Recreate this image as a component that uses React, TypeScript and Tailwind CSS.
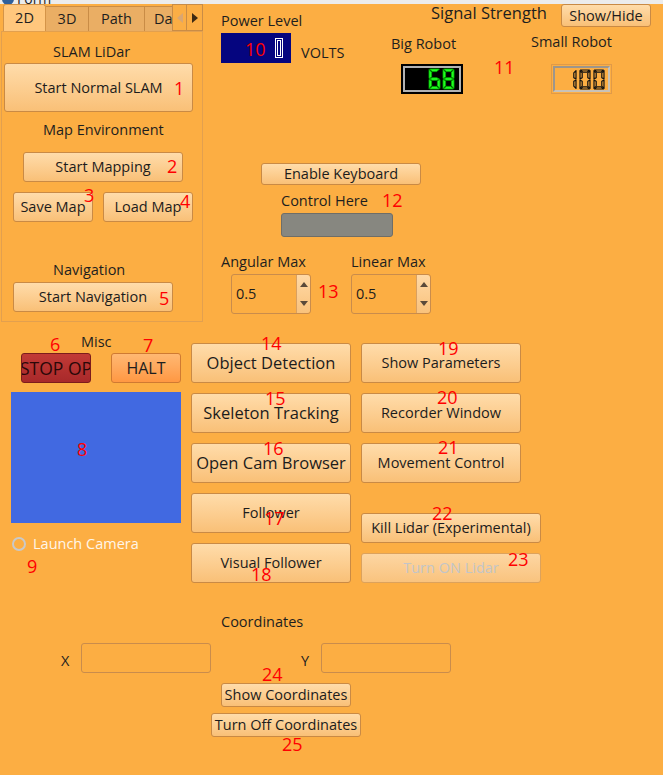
import type { ReactNode } from "react";

const SEG: Record<string, string> = {
  "0": "abcdef",
  "1": "bc",
  "6": "acdefg",
  "8": "abcdefg",
};

function Digit({
  ch,
  w,
  h,
  t,
  fill,
  stroke,
  sw = 1,
}: {
  ch: string;
  w: number;
  h: number;
  t: number;
  fill: string;
  stroke: string;
  sw?: number;
}) {
  const m = h / 2;
  const g = 0.6;
  const P: Record<string, number[][]> = {
    a: [[g, 0], [w - g, 0], [w - g - t, t], [g + t, t]],
    d: [[g, h], [w - g, h], [w - g - t, h - t], [g + t, h - t]],
    f: [[0, g], [t, g + t], [t, m - t / 2 - g], [0, m - g]],
    e: [[0, m + g], [t, m + t / 2 + g], [t, h - g - t], [0, h - g]],
    b: [[w, g], [w - t, g + t], [w - t, m - t / 2 - g], [w, m - g]],
    c: [[w, m + g], [w - t, m + t / 2 + g], [w - t, h - g - t], [w, h - g]],
    g: [
      [g, m],
      [g + t, m - t / 2],
      [w - g - t, m - t / 2],
      [w - g, m],
      [w - g - t, m + t / 2],
      [g + t, m + t / 2],
    ],
  };
  const on = SEG[ch] ?? "";
  return (
    <svg width={w + 2} height={h + 2} viewBox={`-1 -1 ${w + 2} ${h + 2}`}>
      {on.split("").map((s) => (
        <polygon
          key={s}
          points={P[s].map((p) => p.join(",")).join(" ")}
          fill={fill}
          stroke={stroke}
          strokeWidth={sw}
          strokeLinejoin="round"
        />
      ))}
    </svg>
  );
}

function Btn({
  className,
  children,
  disabled,
}: {
  className: string;
  children: ReactNode;
  disabled?: boolean;
}) {
  return (
    <button
      className={`flex items-center justify-center whitespace-nowrap overflow-hidden rounded-[3px] border bg-linear-to-b ${
        disabled
          ? "border-[#dca25c] from-[#fdd6a2] to-[#f9c37e] text-[#c2c5c8]"
          : "border-[#c98a45] from-[#ffdcaa] to-[#f9c077] text-[#1c1c1c]"
      } ${className}`}
    >
      {children}
    </button>
  );
}

function SpinBox() {
  return (
    <div className="flex w-[80px] h-[40px] rounded-[3px] border border-[#c98c4c]">
      <div className="flex-1 flex items-center pl-[4px] text-[14.5px] text-[#1c1c1c]">0.5</div>
      <div className="w-[14px] flex flex-col border-l border-[#d9a060] bg-linear-to-b from-[#ffd9a6] to-[#f9c27c] rounded-r-[3px]">
        <div className="flex-1 flex items-center justify-center">
          <svg width="8" height="5" viewBox="0 0 8 5">
            <polygon points="4,0 8,5 0,5" fill="#5a4a3a" />
          </svg>
        </div>
        <div className="flex-1 flex items-center justify-center">
          <svg width="8" height="5" viewBox="0 0 8 5">
            <polygon points="0,0 8,0 4,5" fill="#5a4a3a" />
          </svg>
        </div>
      </div>
    </div>
  );
}

const notes: [string, number, number][] = [
  ["1", 174, 79],
  ["2", 167, 157],
  ["3", 84, 186],
  ["4", 180, 192],
  ["5", 159, 289],
  ["6", 50, 335],
  ["7", 143, 336],
  ["8", 77, 440],
  ["9", 27, 557],
  ["10", 245, 40],
  ["11", 494, 58],
  ["12", 382, 191],
  ["13", 318, 282],
  ["14", 261, 334],
  ["15", 265, 389],
  ["16", 263, 439],
  ["17", 264, 509],
  ["18", 251, 565],
  ["19", 438, 339],
  ["20", 437, 388],
  ["21", 438, 438],
  ["22", 432, 504],
  ["23", 508, 550],
  ["24", 262, 665],
  ["25", 282, 735],
];

function TabWidget() {
  return (
    <div className="ml-[1px] w-[202px] flex flex-col">
      <div className="flex h-[27px] items-end">
        <div className="w-[171px] flex items-end overflow-hidden h-[27px] pl-[2px]">
          <div className="h-[27px] w-[43px] shrink-0 flex items-center justify-center bg-[#ffc77d] border border-b-0 border-[#d49448] rounded-t-[3px]">2D</div>
          <div className="h-[25px] w-[43px] shrink-0 flex items-center justify-center bg-[#eaae64] border border-l-0 border-b-0 border-[#c98c46]">3D</div>
          <div className="h-[25px] w-[56px] shrink-0 flex items-center justify-center bg-[#eaae64] border border-l-0 border-b-0 border-[#c98c46]">Path</div>
          <div className="h-[25px] w-[50px] shrink-0 flex items-center pl-[9px] bg-[#eaae64] border border-l-0 border-b-0 border-[#c98c46]">Data</div>
        </div>
        <div className="h-[27px] w-[15px] flex items-center justify-center border border-[#c98c46] bg-[#fbae45]">
          <svg width="6" height="10" viewBox="0 0 6 10">
            <polygon points="6,0 6,10 0,5" fill="#d9a672" />
          </svg>
        </div>
        <div className="h-[27px] w-[16px] flex items-center justify-center border border-l-0 border-[#c98c46] bg-[#fbae45]">
          <svg width="6" height="10" viewBox="0 0 6 10">
            <polygon points="0,0 0,10 6,5" fill="#3d2a12" />
          </svg>
        </div>
      </div>
      <div className="h-[291px] border border-[#e2a04f] flex flex-col">
        <div className="mt-[10px] ml-[51px] leading-[20px]">SLAM LiDar</div>
        <Btn className="mt-[1px] ml-[2px] w-[189px] h-[49px]">Start Normal SLAM</Btn>
        <div className="mt-[8px] ml-[41px] leading-[20px]">Map Environment</div>
        <Btn className="mt-[12px] ml-[21px] w-[160px] h-[30px]">Start Mapping</Btn>
        <div className="mt-[10px] flex">
          <Btn className="ml-[11px] w-[80px] h-[30px]">Save Map</Btn>
          <Btn className="ml-[10px] w-[90px] h-[30px]">Load Map</Btn>
        </div>
        <div className="mt-[38px] ml-[51px] leading-[20px]">Navigation</div>
        <Btn className="mt-[2px] ml-[11px] w-[160px] h-[30px]">Start Navigation</Btn>
      </div>
    </div>
  );
}

function RightPanel() {
  return (
    <div className="flex-1 flex flex-col">
      <div className="flex items-start">
        <div className="w-[188px] pl-[18px] flex flex-col">
          <div className="mt-[7px] leading-[20px]">Power Level</div>
          <div className="mt-[2px] flex items-start">
            <div className="w-[70px] h-[30px] bg-[#05057f] flex items-center justify-end pr-[8px]">
              <svg width="8" height="20" viewBox="0 0 8 20">
                <rect x="0.5" y="0.5" width="7" height="19" fill="none" stroke="#ffffff" strokeWidth="1" />
                <rect x="2.5" y="2.5" width="3" height="15" fill="none" stroke="#ffffff" strokeWidth="1" />
              </svg>
            </div>
            <div className="ml-[10px] mt-[10px] leading-[20px]">VOLTS</div>
          </div>
        </div>
        <div className="flex-1 flex flex-col">
          <div className="flex items-start h-[23px]">
            <div className="ml-[40px] text-[16.5px] leading-[18px]">Signal Strength</div>
            <Btn className="ml-auto mr-[12px] w-[90px] h-[23px]">Show/Hide</Btn>
          </div>
          <div className="flex items-start">
            <div className="w-[140px] flex flex-col">
              <div className="mt-[7px] leading-[20px]">Big Robot</div>
              <div className="mt-[10px] ml-[10px] w-[62px] h-[30px] border-2 border-black">
                <div className="w-full h-full border-2 border-[#b2b2b2] bg-black flex items-center justify-end pr-[4px] gap-[1px]">
                  <Digit ch="6" w={11} h={20} t={2.6} fill="#22ff22" stroke="#00b400" sw={0.8} />
                  <Digit ch="8" w={11} h={20} t={2.6} fill="#22ff22" stroke="#00b400" sw={0.8} />
                </div>
              </div>
            </div>
            <div className="flex flex-col">
              <div className="mt-[5px] leading-[20px]">Small Robot</div>
              <div className="mt-[12px] ml-[20px] w-[61px] h-[30px] border border-[#e09a48] p-[1px]">
                <div className="w-full h-full border-2 border-t-[#9d968c] border-l-[#9d968c] border-b-[#c8c2b8] border-r-[#c8c2b8] flex items-center justify-end pr-[3px] gap-[2px]">
                  <Digit ch="1" w={10} h={19} t={2.2} fill="none" stroke="#111111" sw={1.2} />
                  <Digit ch="0" w={10} h={19} t={2.2} fill="none" stroke="#111111" sw={1.2} />
                  <Digit ch="0" w={10} h={19} t={2.2} fill="none" stroke="#111111" sw={1.2} />
                </div>
              </div>
            </div>
          </div>
        </div>
      </div>
      <Btn className="mt-[69px] ml-[58px] w-[160px] h-[22px]">Enable Keyboard</Btn>
      <div className="mt-[6px] ml-[78px] leading-[20px]">Control Here</div>
      <div className="mt-[2px] ml-[78px] w-[112px] h-[24px] rounded-[3px] border border-[#6e6e68] bg-[#878780]" />
      <div className="mt-[15px] flex">
        <div className="ml-[18px] w-[130px] flex flex-col">
          <div className="leading-[20px]">Angular Max</div>
          <div className="mt-[2px] ml-[10px]">
            <SpinBox />
          </div>
        </div>
        <div className="flex flex-col">
          <div className="leading-[20px]">Linear Max</div>
          <div className="mt-[2px]">
            <SpinBox />
          </div>
        </div>
      </div>
    </div>
  );
}

export default function App() {
  return (
    <div className="relative w-[663px] h-[775px] overflow-hidden bg-[#fcae43] text-[14.5px] text-[#1e1e1e] font-['Open_Sans',sans-serif]">
      <div className="h-[4px] overflow-hidden bg-[#ececec]">
        <div className="-mt-[9px] ml-[2px] flex items-center gap-[3px]">
          <div className="w-[12px] h-[12px] rounded-full bg-[#2f5f9a]" />
          <div className="text-[14px] leading-[16px]">Form</div>
        </div>
      </div>

      <div className="flex h-[318px]">
        <TabWidget />
        <RightPanel />
      </div>

      <div className="flex">
        <div className="w-[191px] flex flex-col">
          <div className="mt-[10px] ml-[81px] leading-[20px]">Misc</div>
          <div className="mt-[1px] flex">
            <button className="ml-[21px] w-[70px] h-[30px] flex items-center justify-center overflow-hidden whitespace-nowrap rounded-[3px] border border-[#7c1c1c] bg-linear-to-b from-[#c23a36] to-[#a8292a] text-[17.5px] text-[#2a0808]">
              STOP OP
            </button>
            <button className="ml-[20px] w-[70px] h-[30px] flex items-center justify-center rounded-[3px] border border-[#cf7a32] bg-linear-to-b from-[#ffb872] to-[#ff9842] text-[16px] text-[#1e1e1e]">
              HALT
            </button>
          </div>
          <div className="mt-[9px] ml-[11px] w-[170px] h-[131px] bg-[#4169e1]" />
          <div className="mt-[11px] ml-[12px] flex items-center h-[20px]">
            <div className="w-[14px] h-[14px] rounded-full border-2 border-[#c9c9c9]" />
            <div className="ml-[7px] text-[#fff6ea] leading-[20px]">Launch Camera</div>
          </div>
        </div>

        <div className="mt-[21px] flex">
          <div className="flex flex-col gap-[10px]">
            <Btn className="w-[160px] h-[40px] text-[16.5px]">Object Detection</Btn>
            <Btn className="w-[160px] h-[40px] text-[16.5px]">Skeleton Tracking</Btn>
            <Btn className="w-[160px] h-[40px] text-[16.5px]">Open Cam Browser</Btn>
            <Btn className="w-[160px] h-[40px]">Follower</Btn>
            <Btn className="w-[160px] h-[40px]">Visual Follower</Btn>
          </div>
          <div className="ml-[10px] flex flex-col">
            <Btn className="w-[160px] h-[40px]">Show Parameters</Btn>
            <Btn className="mt-[10px] w-[160px] h-[40px]">Recorder Window</Btn>
            <Btn className="mt-[10px] w-[160px] h-[40px]">Movement Control</Btn>
            <Btn className="mt-[30px] w-[180px] h-[30px]">Kill Lidar (Experimental)</Btn>
            <Btn className="mt-[10px] w-[180px] h-[30px]" disabled>
              Turn ON Lidar
            </Btn>
          </div>
        </div>
      </div>

      <div className="flex flex-col">
        <div className="mt-[29px] ml-[221px] leading-[20px]">Coordinates</div>
        <div className="mt-[11px] flex items-center">
          <div className="ml-[61px] w-[20px] pt-[6px] leading-[20px]">X</div>
          <div className="w-[130px] h-[30px] rounded-[3px] border border-[#c98c4c]" />
          <div className="ml-[90px] w-[20px] pt-[6px] leading-[20px]">Y</div>
          <div className="w-[130px] h-[30px] rounded-[3px] border border-[#c98c4c]" />
        </div>
        <Btn className="mt-[10px] ml-[221px] w-[130px] h-[24px]">Show Coordinates</Btn>
        <Btn className="mt-[6px] ml-[211px] w-[150px] h-[24px]">Turn Off Coordinates</Btn>
      </div>

      {notes.map(([n, x, y]) => (
        <span
          key={n}
          className="absolute text-[18px] leading-[18px] text-[#ff0000]"
          style={{ left: x, top: y }}
        >
          {n}
        </span>
      ))}
    </div>
  );
}
